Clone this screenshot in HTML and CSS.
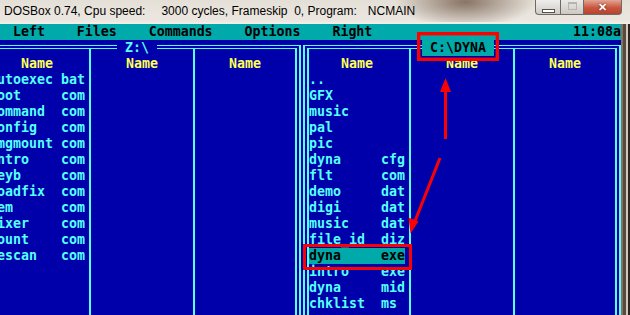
FILE: index.html
```html
<!DOCTYPE html>
<html lang="en">
<head>
  <meta charset="UTF-8" />
  <title>DOSBox 0.74 - NCMAIN</title>
  <link rel="stylesheet" href="styles.css">
</head>
<body>
  <div class="window">
    <!-- Window title bar -->
    <div class="titlebar">
      <span class="caption">DOSBox 0.74, Cpu speed:<span class="gap-a">3000 cycles, Frameskip  0, Program:</span><span class="gap-b">NCMAIN</span></span>
      <div class="buttons">
        <span class="btn btn-min"><i></i></span>
        <span class="btn btn-max"><i></i></span>
        <span class="btn btn-close">&#x2715;</span>
      </div>
    </div>

    <div class="client">
      <div class="screen">
        <div class="dos">
          <!-- Norton Commander menu -->
          <div class="menubar">
            <span class="menu">    Left    Files    Commands    Options    Right</span>
            <span class="clock">11:08a</span>
          </div>

          <div class="panels">
            <!-- Left panel -->
            <div class="panel">
              <span class="path">&nbsp;Z:\&nbsp;</span>
              <div class="col col-a">
                <div class="head">Name</div>
                <div class="file"><span class="nm">autoexec</span><span>bat</span></div>
                <div class="file"><span class="nm">boot</span><span>com</span></div>
                <div class="file"><span class="nm">command</span><span>com</span></div>
                <div class="file"><span class="nm">config</span><span>com</span></div>
                <div class="file"><span class="nm">imgmount</span><span>com</span></div>
                <div class="file"><span class="nm">intro</span><span>com</span></div>
                <div class="file"><span class="nm">keyb</span><span>com</span></div>
                <div class="file"><span class="nm">loadfix</span><span>com</span></div>
                <div class="file"><span class="nm">mem</span><span>com</span></div>
                <div class="file"><span class="nm">mixer</span><span>com</span></div>
                <div class="file"><span class="nm">mount</span><span>com</span></div>
                <div class="file"><span class="nm">rescan</span><span>com</span></div>
              </div>
              <div class="col col-b">
                <div class="head">Name</div>
              </div>
              <div class="col col-c">
                <div class="head">Name</div>
              </div>
            </div>

            <!-- Right panel (active) -->
            <div class="panel">
              <span class="path active">&nbsp;C:\DYNA&nbsp;</span>
              <div class="col col-a">
                <div class="head">Name</div>
                <div class="file"><span class="nm">..</span></div>
                <div class="file"><span class="nm">GFX</span></div>
                <div class="file"><span class="nm">music</span></div>
                <div class="file"><span class="nm">pal</span></div>
                <div class="file"><span class="nm">pic</span></div>
                <div class="file"><span class="nm">dyna</span><span>cfg</span></div>
                <div class="file"><span class="nm">flt</span><span>com</span></div>
                <div class="file"><span class="nm">demo</span><span>dat</span></div>
                <div class="file"><span class="nm">digi</span><span>dat</span></div>
                <div class="file"><span class="nm">music</span><span>dat</span></div>
                <div class="file"><span class="nm">file_id</span><span>diz</span></div>
                <div class="file sel"><span class="nm">dyna</span><span>exe</span></div>
                <div class="file"><span class="nm">intro</span><span>exe</span></div>
                <div class="file"><span class="nm">dyna</span><span>mid</span></div>
                <div class="file"><span class="nm">chklist</span><span>ms</span></div>
              </div>
              <div class="col col-b">
                <div class="head">Name</div>
              </div>
              <div class="col col-c">
                <div class="head">Name</div>
              </div>
            </div>
          </div>
        </div>
      </div>
      <div class="frame"></div>
    </div>
  </div>

  <!-- Red annotations drawn over the screenshot -->
  <svg class="marks" width="630" height="315" viewBox="0 0 630 315">
    <rect x="418.7" y="33.7" width="78.6" height="25.6" fill="none" stroke="#f00" stroke-width="3.4"/>
    <rect x="304.5" y="245.5" width="106" height="23" fill="none" stroke="#f00" stroke-width="3"/>
    <line x1="445.5" y1="139" x2="445.5" y2="90" stroke="#f00" stroke-width="3"/>
    <polygon points="445.5,78 440,92 451,92" fill="#f00"/>
    <line x1="440" y1="158" x2="415" y2="221" stroke="#f00" stroke-width="3"/>
    <polygon points="410.5,233.5 408.5,217.5 418.5,221.5" fill="#f00"/>
  </svg>
</body>
</html>
```

FILE: styles.css
```css
body {
  margin: 0;
  width: 630px;
  height: 315px;
  overflow: hidden;
  position: relative;
  background: #4d4238;
  font-family: "Liberation Sans", Arial, sans-serif;
}
.window {
  display: flex;
  flex-direction: column;
}
.titlebar {
  height: 22px;
  border-bottom: 2px solid #f1eee8;
  display: flex;
  align-items: flex-start;
  background:
    radial-gradient(ellipse 70px 26px at 465px 2px, rgba(105, 80, 62, 0.75), rgba(105, 80, 62, 0)),
    linear-gradient(#e4dfd6, #ece8e1);
}
.caption {
  font-size: 12px;
  line-height: 14px;
  padding: 4px 0 0 4px;
  white-space: pre;
  color: #000;
}
.gap-a {
  margin-left: 16px;
}
.gap-b {
  margin-left: 11px;
}
.buttons {
  margin-left: auto;
  margin-right: 8px;
  display: flex;
  height: 15px;
}
.btn {
  height: 14px;
  border: 1px solid #6f6a64;
  border-top: none;
  display: flex;
  align-items: center;
  justify-content: center;
  box-sizing: content-box;
}
.btn-min {
  width: 24px;
  border-bottom-left-radius: 4px;
  background: linear-gradient(#efeeec, #cfcac4);
}
.btn-min i {
  width: 11px;
  height: 2px;
  margin-top: 8px;
  background: #fff;
  border: 1px solid #56524d;
}
.btn-max {
  width: 22px;
  border-left: none;
  background: linear-gradient(#ebe9e6, #cdc8c2);
}
.btn-max i {
  width: 7px;
  height: 5px;
  border: 1px solid #b7b3ad;
  border-top-width: 2px;
  margin-top: -2px;
}
.btn-close {
  width: 37px;
  border-left: none;
  border-bottom-right-radius: 4px;
  background: linear-gradient(#e3a594, #c9553f 55%, #b84430);
  color: #fff;
  font-size: 11px;
  font-weight: bold;
  line-height: 14px;
  text-shadow: 0 0 2px #5a1a10;
}
.client {
  display: flex;
  height: 291px;
}
.screen {
  width: 621px;
  overflow: hidden;
  background: #0000aa;
}
.frame {
  flex: 1;
  background: linear-gradient(to right, #8a705c 0 2px, #5a4a3c 2px 5px, #cfc8bd 5px 7px, #2a2420 7px);
}
.dos {
  width: 640px;
  margin-left: -19px;
  background: #0000aa;
  color: #55ffff;
  font: bold 13.28px/16px "DejaVu Sans Mono", monospace;
}
.menubar {
  height: 16px;
  display: flex;
  justify-content: space-between;
  background: #00aaaa;
  color: #000;
}
.menu {
  white-space: pre;
}
.panels {
  display: flex;
  gap: 2px;
  padding-left: 2px;
}
.panel {
  position: relative;
  width: 306px;
  height: 300px;
  margin-top: 5px;
  border: 6px double #55ffff;
  border-top-width: 4px;
  border-bottom: none;
  display: flex;
}
.path {
  position: absolute;
  top: -9px;
  left: 128px;
  height: 16px;
  background: #0000aa;
  white-space: pre;
}
.path.active {
  left: 113px;
  background: #00aaaa;
  color: #000;
}
.col {
  padding-top: 7px;
  border-right: 2px solid #55ffff;
}
.col-a {
  width: 100px;
}
.col-b {
  width: 102px;
}
.col-c {
  width: 100px;
  border-right: none;
}
.head {
  color: #ffff55;
  text-align: center;
}
.col-a .head {
  width: 96px;
}
.file {
  display: flex;
  height: 16px;
  white-space: pre;
}
.nm {
  width: 72px;
}
.file.sel {
  width: 96px;
  background: #00aaaa;
  color: #000;
}
.marks {
  position: absolute;
  top: 0;
  left: 0;
  pointer-events: none;
}
```
